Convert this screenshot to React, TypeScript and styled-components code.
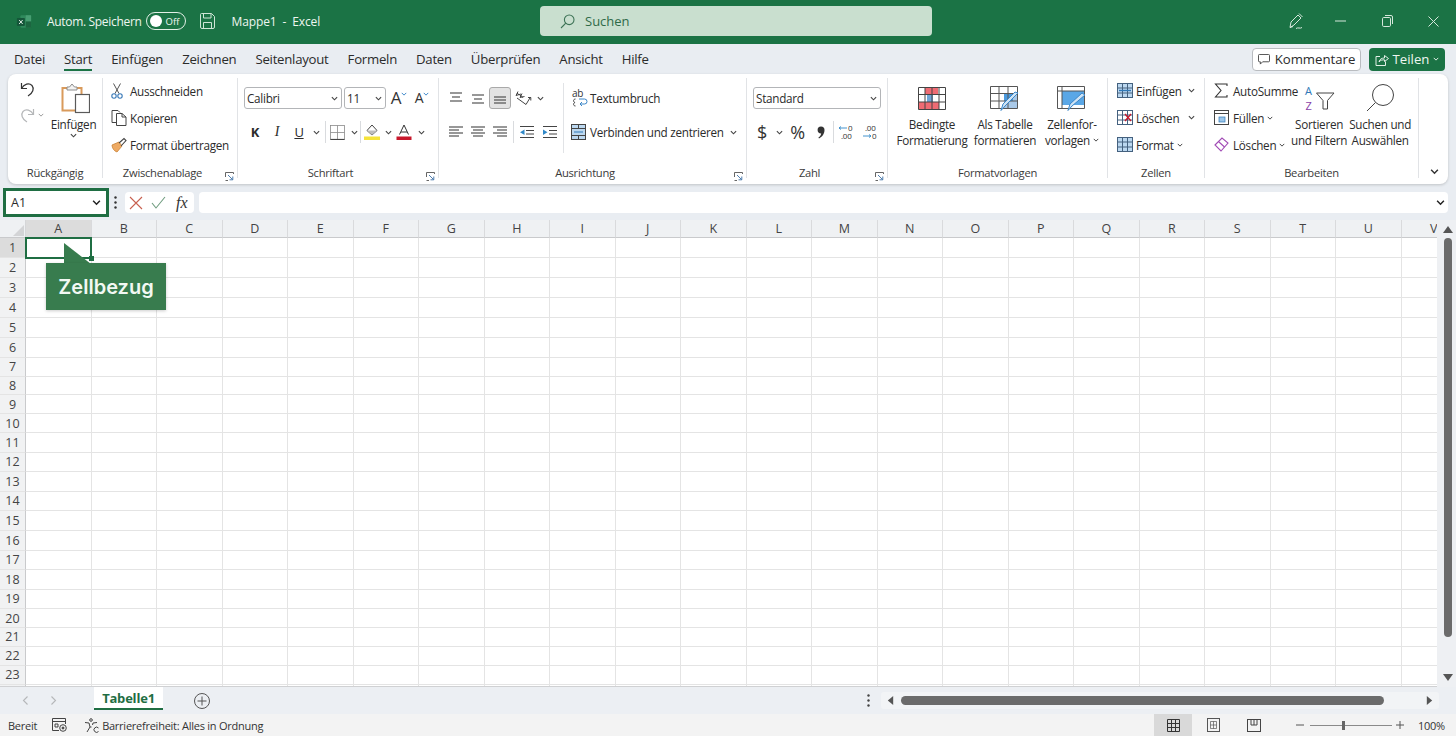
import React from 'react'
import styled, { createGlobalStyle } from 'styled-components'

const GlobalStyle = createGlobalStyle`
    html, body, #root {
        margin: 0;
        padding: 0;
        height: 100%;
        overflow: hidden;
    }
    body {
        font-family: "Open Sans", "Noto Sans", "Liberation Sans", sans-serif;
        color: #2b2b2b;
        background: #e9edf2;
    }
    * { box-sizing: border-box; }
    svg { display: block; flex-shrink: 0; }
`

const Page = styled.div`
    width: 1456px;
    height: 736px;
    display: flex;
    flex-direction: column;
    overflow: hidden;
`

// Title bar
const TitleBar = styled.header`
    height: 44px;
    flex: none;
    display: grid;
    grid-template-columns: 540px 392px 1fr;
    align-items: center;
    padding-bottom: 2px;
    background: #1b7345;
    color: #eef6f0;
    font-size: 12px;
`
const TitleLeft = styled.div`
    display: flex;
    align-items: center;
    padding-left: 16px;
`
const AutoSave = styled.span`
    margin-left: 15px;
    letter-spacing: -0.32px;
`
const Toggle = styled.span`
    width: 40px;
    height: 18px;
    margin-left: 4px;
    border: 1px solid #e3f0e7;
    border-radius: 9px;
    display: flex;
    align-items: center;
    padding-left: 3px;
    gap: 4px;
    font-size: 9.5px;
`
const ToggleKnob = styled.span`
    width: 12px;
    height: 12px;
    border-radius: 50%;
    background: #fff;
`
const DocTitle = styled.span`
    margin-left: 17px;
    white-space: pre;
    letter-spacing: -0.12px;
`
const SearchBox = styled.div`
    height: 30px;
    border-radius: 4px;
    background: #c9dfcf;
    color: #2f6a48;
    display: flex;
    align-items: center;
    padding-left: 20px;
    gap: 10px;
    font-size: 13px;
`
const WindowControls = styled.div`
    display: flex;
    align-items: center;
    padding-left: 354px;
`
const WindowSlot = styled.span<{ $w: number }>`
    width: ${(p) => p.$w}px;
    display: flex;
    justify-content: center;
`

// Tab row
const TabRow = styled.nav`
    height: 30px;
    flex: none;
    display: flex;
    align-items: center;
    padding: 0 11px 0 14px;
    gap: 19px;
    font-size: 13.2px;
    letter-spacing: -0.25px;
`
const Tab = styled.span<{ $active?: boolean }>`
    position: relative;
    line-height: 30px;
    white-space: nowrap;
    ${(p) =>
        p.$active &&
        `
        &::after {
            content: '';
            position: absolute;
            left: 0;
            right: 0;
            bottom: 3px;
            height: 2px;
            background: #1b7345;
        }
    `}
`
const TabSpacer = styled.span`
    flex: 1;
`
const CommentButton = styled.button`
    width: 109px;
    height: 23px;
    margin-right: -11px;
    border: 1px solid #b9bcc0;
    border-radius: 4px;
    background: #fff;
    display: flex;
    align-items: center;
    justify-content: center;
    gap: 5px;
    font: inherit;
    color: inherit;
    padding: 0;
`
const ShareButton = styled.button`
    width: 76px;
    height: 23px;
    border: none;
    border-radius: 4px;
    background: #1b7345;
    color: #eef6f0;
    display: flex;
    align-items: center;
    justify-content: center;
    gap: 4px;
    font: inherit;
    padding: 0;
`

// Ribbon
const Ribbon = styled.section`
    height: 110px;
    flex: none;
    margin: 0 8px;
    background: #fff;
    border-radius: 8px;
    box-shadow: 0 1px 3px rgba(0, 0, 0, 0.18);
    display: flex;
    font-size: 11.7px;
    letter-spacing: -0.27px;
`
const Group = styled.div<{ $w: number; $last?: boolean }>`
    width: ${(p) => p.$w}px;
    flex: none;
    margin: 4px 0 6px;
    display: flex;
    flex-direction: column;
    position: relative;
    border-right: ${(p) => (p.$last ? 'none' : '1px solid #e1e3e6')};
`
const GroupBody = styled.div`
    flex: 1;
    display: flex;
    min-height: 0;
`
const GroupLabel = styled.div<{ $launcher?: boolean }>`
    height: 20px;
    margin-bottom: -5px;
    flex: none;
    line-height: 20px;
    font-size: 11.2px;
    text-align: center;
    color: #3a3a3a;
    padding-right: ${(p) => (p.$launcher ? 15 : 0)}px;
`
const Launcher = styled.span`
    position: absolute;
    right: 3px;
    bottom: -3px;
`
const CommandStack = styled.div<{ $left: number }>`
    margin-top: -1px;
    padding-left: ${(p) => p.$left}px;
    display: flex;
    flex-direction: column;
`
const Command = styled.div`
    height: 27px;
    display: flex;
    align-items: center;
    white-space: nowrap;
`
const CommandIcon = styled.span`
    width: 19px;
    display: flex;
    justify-content: flex-start;
`
const Caret = styled.span<{ $left: number }>`
    margin-left: ${(p) => p.$left}px;
`
const UndoColumn = styled.div`
    width: 42px;
    padding: 3px 0 0 12px;
    display: flex;
    flex-direction: column;
    gap: 10px;
`
const UndoRow = styled.div`
    display: flex;
    align-items: center;
    gap: 3px;
`
const BigButton = styled.div<{ $w: number; $left?: number }>`
    width: ${(p) => p.$w}px;
    margin-left: ${(p) => p.$left ?? 0}px;
    flex: none;
    padding-top: 3px;
    display: flex;
    flex-direction: column;
    align-items: center;
    line-height: 16px;
    text-align: center;
    white-space: nowrap;
`
const BigIcon = styled.div`
    height: 34px;
    display: flex;
    align-items: center;
    justify-content: center;
`
const BigLabel = styled.div`
    margin-top: 1px;
    display: flex;
    flex-direction: column;
    align-items: center;
`
const LabelLine = styled.span`
    display: flex;
    align-items: center;
    gap: 3px;
`
const ToolRows = styled.div`
    display: flex;
    flex-direction: column;
    padding-top: 9px;
    gap: 12px;
`
const ToolRow = styled.div<{ $left?: number }>`
    height: 22px;
    display: flex;
    align-items: center;
    white-space: nowrap;
    padding-left: ${(p) => p.$left ?? 0}px;
`
const Slot = styled.span<{ $w: number; $active?: boolean }>`
    width: ${(p) => p.$w}px;
    height: 22px;
    flex: none;
    display: flex;
    align-items: center;
    justify-content: center;
    border-radius: 3px;
    ${(p) => p.$active && 'background: #e3e3e3; border: 1px solid #a9a9a9;'}
`
const Select = styled.div<{ $w: number }>`
    width: ${(p) => p.$w}px;
    height: 22px;
    flex: none;
    border: 1px solid #b3b5b8;
    border-radius: 3px;
    display: flex;
    align-items: center;
    justify-content: space-between;
    padding: 0 3px 0 2px;
`
const Divider = styled.span`
    width: 1px;
    height: 22px;
    flex: none;
    background: #d9dbde;
`
const FontLetter = styled.span<{ $style: 'bold' | 'italic' | 'under' }>`
    font-family: 'Liberation Serif', serif;
    font-size: 14px;
    ${(p) => p.$style === 'bold' && "font-weight: 700; font-family: 'Open Sans', sans-serif; font-size: 13px;"}
    ${(p) => p.$style === 'italic' && 'font-style: italic;'}
    ${(p) => p.$style === 'under' && "text-decoration: underline; font-family: 'Open Sans', sans-serif; font-size: 13px;"}
`
const GrowFont = styled.span`
    font-size: 17px;
    line-height: 22px;
    display: flex;
    align-items: flex-start;
    color: #333;
`
const ShrinkFont = styled(GrowFont)`
    font-size: 14px;
`
const BlueTick = styled.span`
    margin-top: 4px;
`
const NumberGlyph = styled.span`
    font-size: 18px;
    color: #333;
`
const CollapseSlot = styled.div`
    flex: 1;
    display: flex;
    justify-content: flex-end;
    align-items: flex-end;
    padding: 0 9px 8px 0;
`
const AlignRows = styled(ToolRows)`
    position: relative;
`
const AlignDivider = styled.span`
    position: absolute;
    left: 124px;
    top: 5px;
    width: 1px;
    height: 70px;
    background: #e1e3e6;
`

// Formula bar
const FormulaBar = styled.div`
    height: 36px;
    flex: none;
    display: flex;
    align-items: center;
    padding: 1px 8px 0 3px;
`
const NameBox = styled.div`
    width: 106px;
    height: 29px;
    border: 3px solid #1f6e43;
    background: #fff;
    display: flex;
    align-items: center;
    justify-content: space-between;
    padding: 0 5px 0 5px;
    font-size: 12.5px;
`
const GripSlot = styled.span`
    width: 12px;
    margin: 0 4px 0 0;
    display: flex;
    justify-content: center;
`
const FormulaButtons = styled.div`
    width: 69px;
    height: 21px;
    border-radius: 4px;
    background: #fff;
    display: flex;
    align-items: center;
    gap: 8px;
    padding-left: 4px;
`
const FxLabel = styled.span`
    margin-left: 2px;
    font-family: 'Liberation Serif', serif;
    font-style: italic;
    font-size: 16px;
    color: #333;
`
const FormulaInput = styled.div`
    flex: 1;
    height: 21px;
    margin-left: 5px;
    border-radius: 4px;
    background: #fff;
    display: flex;
    align-items: center;
    justify-content: flex-end;
    padding-right: 3px;
`

// Sheet
const SheetArea = styled.div`
    height: 467px;
    flex: none;
    display: flex;
    position: relative;
`
const SheetGrid = styled.div<{ $rows: string }>`
    width: 1437px;
    flex: none;
    display: grid;
    grid-template-columns: 26px repeat(22, 65.5px);
    grid-template-rows: ${(p) => p.$rows};
    overflow: hidden;
    background: #fff;
    border-bottom: 1px solid #d0d1d3;
`
const Corner = styled.div`
    background: #eff1f3;
    border-right: 1px solid #d5d6d8;
    border-bottom: 1px solid #c9cacc;
    display: flex;
    align-items: flex-end;
    justify-content: flex-end;
    padding: 0 1px 1px 0;
`
const ColHeader = styled.div<{ $active?: boolean }>`
    background: ${(p) => (p.$active ? '#dcdcdc' : '#eff1f3')};
    border-right: 1px solid #d9dadc;
    border-bottom: 1px solid #c9cacc;
    font-size: 12.5px;
    color: #444;
    display: flex;
    align-items: center;
    justify-content: center;
`
const RowHeader = styled.div<{ $active?: boolean }>`
    background: ${(p) => (p.$active ? '#dcdcdc' : '#f1f2f3')};
    border-right: 1px solid #c9cacc;
    border-bottom: 1px solid #e4e4e4;
    font-size: 12.5px;
    color: #444;
    display: flex;
    align-items: center;
    justify-content: center;
`
const Cell = styled.div`
    border-right: 1px solid #e4e4e4;
    border-bottom: 1px solid #e4e4e4;
`
const Selection = styled.div`
    position: absolute;
    left: 25px;
    top: 17px;
    width: 67px;
    height: 22px;
    border: 2px solid #1f6e43;
    &::after {
        content: '';
        position: absolute;
        right: -4px;
        bottom: -4px;
        width: 5px;
        height: 5px;
        background: #1f6e43;
    }
`
const CalloutArrow = styled.svg`
    position: absolute;
    left: 63px;
    top: 23px;
`
const Callout = styled.div`
    position: absolute;
    left: 46px;
    top: 43px;
    width: 120px;
    height: 47px;
    background: #387c4e;
    color: #f2f8f3;
    font-family: Inter, 'Open Sans', sans-serif;
    font-weight: 600;
    font-size: 20px;
    display: flex;
    align-items: center;
    justify-content: center;
    box-shadow: 0 1px 3px rgba(0, 0, 0, 0.2);
`
const VScroll = styled.div`
    flex: 1;
    background: #eef0f3;
    display: flex;
    flex-direction: column;
    align-items: center;
    padding: 5px 0 5px 2px;
`
const VThumb = styled.div`
    width: 8px;
    height: 399px;
    margin-top: 3px;
    border-radius: 4px;
    background: #6b6b6b;
`
const VFill = styled.div`
    flex: 1;
`

// Sheet tabs bar
const SheetBar = styled.div`
    height: 27px;
    flex: none;
    display: flex;
    align-items: center;
    background: #eceff3;
`
const SheetNav = styled.div`
    width: 94px;
    padding-left: 22px;
    display: flex;
    gap: 21px;
`
const SheetTab = styled.div`
    width: 69px;
    height: 23px;
    margin-top: -5px;
    padding-top: 2px;
    background: #fff;
    border-bottom: 2px solid #1f6e43;
    color: #1f6e43;
    font-weight: 700;
    font-size: 13px;
    letter-spacing: -0.2px;
    display: flex;
    align-items: center;
    justify-content: center;
`
const AddSheet = styled.span`
    margin-left: 31px;
    width: 16px;
`
const SheetDots = styled.span`
    margin-left: 652px;
    width: 12px;
    display: flex;
    justify-content: center;
`
const HScroll = styled.div`
    width: 558px;
    height: 17px;
    margin-left: 7px;
    border-radius: 3px;
    background: #f2f4f6;
    display: flex;
    align-items: center;
    padding: 0 5px 0 5px;
`
const HThumb = styled.div`
    width: 483px;
    height: 9px;
    margin-left: 6px;
    border-radius: 5px;
    background: #6b6b6b;
`
const HScrollEnd = styled.span`
    margin-left: auto;
`

// Status bar
const StatusBar = styled.footer`
    height: 22px;
    flex: none;
    display: flex;
    align-items: center;
    background: #f3f3f3;
    font-size: 11px;
    letter-spacing: -0.25px;
    color: #333;
    padding: 0 11px 0 8px;
    white-space: nowrap;
`
const StatusIcon = styled.span<{ $left: number }>`
    margin-left: ${(p) => p.$left}px;
`
const StatusText = styled.span`
    margin-left: 3px;
`
const StatusSpacer = styled.span`
    flex: 1;
`
const ViewButton = styled.span<{ $active?: boolean; $left?: number }>`
    width: 38px;
    height: 22px;
    margin-left: ${(p) => p.$left ?? 0}px;
    display: flex;
    align-items: center;
    justify-content: center;
    background: ${(p) => (p.$active ? '#d9d9d9' : 'transparent')};
`
const ZoomSlider = styled.div`
    width: 82px;
    height: 1px;
    margin: 0 4px 0 6px;
    background: #8a8a8a;
    position: relative;
`
const ZoomThumb = styled.span`
    position: absolute;
    left: 32px;
    top: -4px;
    width: 3px;
    height: 9px;
    background: #666;
`
const ZoomPercent = styled.span`
    width: 27px;
    margin-left: 14px;
`

// Icons, drawn by hand so that they look like the Office ones
const Chevron = ({ size = 7, color = '#444' }: { size?: number; color?: string }) => (
    <svg width={size} height={size} viewBox="0 0 8 8" fill="none" stroke={color} strokeWidth="1.3">
        <path d="M1 2.5 4 5.5 7 2.5" />
    </svg>
)

const LauncherIcon = () => (
    <svg width="9" height="9" viewBox="0 0 9 9" fill="none" stroke="#555" strokeWidth="0.9">
        <path d="M.5 5V.5H8.5V2M.5 8.5H3" />
        <path d="M3 3 7.5 7.5M7.8 4.5V7.8H4.5" stroke="#3a6ea5" />
    </svg>
)

const Lines = ({ rows, w = 16, color = '#444' }: { rows: number[][]; w?: number; color?: string }) => (
    <svg width={w} height="14" viewBox="0 0 16 14" fill="none" stroke={color} strokeWidth="1.1">
        {rows.map((r, i) => (
            <path key={i} d={`M${r[0]} ${r[2]}H${r[1]}`} />
        ))}
    </svg>
)

const ExcelLogo = () => (
    <svg width="16" height="15" viewBox="0 0 18 16">
        <rect x="5" y="1" width="12" height="14" rx="1" fill="#2f8a5c" />
        <rect x="11" y="1" width="6" height="7" fill="#479e72" />
        <rect x="11" y="8" width="6" height="7" fill="#1c6640" />
        <rect x="1" y="4" width="9" height="9" rx="1" fill="#15573a" />
        <path d="M3.5 6.3 7.5 10.8M7.5 6.3 3.5 10.8" stroke="#e8f3ec" strokeWidth="1.1" />
    </svg>
)

const SaveIcon = () => (
    <svg width="15" height="16" viewBox="0 0 15 16" fill="none" stroke="#cfe5d6" strokeWidth="1">
        <path d="M1.5.5H11.5L14.5 3.5V14A1.5 1.5 0 0 1 13 15.5H2A1.5 1.5 0 0 1 .5 14V1.5A1 1 0 0 1 1.5.5Z" />
        <path d="M3.5 .5V5H11V.5M3.5 15.5V9.5H11.5V15.5" />
    </svg>
)

const PenIcon = () => (
    <svg width="16" height="18" viewBox="0 0 16 18" fill="none" stroke="#d6e8dc" strokeWidth="1">
        <path d="M2 15.5 3 10 10 3 13 6 6 13ZM2 15.5 5 14.5M11 1.5 14.5 5" />
        <path d="M8 16.5C10 15 12 17 14 15.5" />
    </svg>
)

const SearchIcon = () => (
    <svg width="15" height="15" viewBox="0 0 15 15" fill="none" stroke="#3d7356" strokeWidth="1.1">
        <circle cx="9.2" cy="5.8" r="4.8" />
        <path d="M5.8 9.2 1 14" />
    </svg>
)

const MinIcon = () => (
    <svg width="11" height="2" viewBox="0 0 11 2" stroke="#d6e8dc">
        <path d="M0 1H11" />
    </svg>
)
const RestoreIcon = () => (
    <svg width="11" height="12" viewBox="0 0 11 12" fill="none" stroke="#d6e8dc">
        <rect x=".5" y="2.5" width="8" height="9" rx="1.2" />
        <path d="M3 .5H9A1.5 1.5 0 0 1 10.5 2V9" />
    </svg>
)
const CloseIcon = () => (
    <svg width="11" height="11" viewBox="0 0 11 11" stroke="#d6e8dc">
        <path d="M.5.5 10.5 10.5M10.5.5.5 10.5" />
    </svg>
)
const CommentIcon = () => (
    <svg width="12" height="11" viewBox="0 0 13 12" fill="none" stroke="#444">
        <path d="M1.5.5H11.5A1 1 0 0 1 12.5 1.5V7.5A1 1 0 0 1 11.5 8.5H5L2.5 11V8.5H1.5A1 1 0 0 1 .5 7.5V1.5A1 1 0 0 1 1.5.5Z" />
    </svg>
)
const ShareIcon = () => (
    <svg width="14" height="13" viewBox="0 0 14 13" fill="none" stroke="#e3f0e7">
        <path d="M5 3.5H1V12.5H10.5V8.5" />
        <path d="M4 9C4.5 6 7 5 9.5 5V2.5L13.5 5.5 9.5 8.5V6.8C7.5 6.8 5.5 7 4 9Z" />
    </svg>
)

const UndoIcon = () => (
    <svg width="15" height="16" viewBox="0 0 15 16" fill="none" stroke="#333" strokeWidth="1.2">
        <path d="M1.5 2V7.5H7" />
        <path d="M1.5 7.5C4 3 9 1.5 12 4.5C14.5 7.5 13 12 8 15" />
    </svg>
)
const RedoIcon = () => (
    <svg width="15" height="16" viewBox="0 0 15 16" fill="none" stroke="#b5b7b9" strokeWidth="1.2">
        <path d="M13.5 2V7.5H8" />
        <path d="M13.5 7.5C11 3 6 1.5 3 4.5C.5 7.5 2 12 7 15" />
    </svg>
)
const PasteIcon = () => (
    <svg width="32" height="31" viewBox="-3 0 32 31" fill="none">
        <path d="M6 5H1.5V27.5H14" stroke="#d99a5b" strokeWidth="2" />
        <path d="M16 5H20.5V11" stroke="#d99a5b" strokeWidth="2" />
        <path d="M6 7V4H8.5L11 1 13.5 4H16V7Z" stroke="#8d8d8d" fill="#f3f3f3" />
        <rect x="14.5" y="11.5" width="14" height="18" fill="#fff" stroke="#5a5a5a" strokeWidth="1.2" />
    </svg>
)
const CutIcon = () => (
    <svg width="12" height="16" viewBox="0 0 12 16" fill="none">
        <path d="M2.5 .5 8 10.5M9.5 .5 4 10.5" stroke="#555" />
        <circle cx="3" cy="13" r="2.2" stroke="#3a7ab8" strokeWidth="1.1" />
        <circle cx="9" cy="13" r="2.2" stroke="#3a7ab8" strokeWidth="1.1" />
    </svg>
)
const CopyIcon = () => (
    <svg width="16" height="16" viewBox="0 0 16 16" fill="none" stroke="#444">
        <path d="M5 12.5H1V.5H7L9 2.5" />
        <path d="M5.5 3.5H11L15 7V15.5H5.5Z" />
        <path d="M11 3.5V7H15" />
    </svg>
)
const PainterIcon = () => (
    <svg width="16" height="16" viewBox="0 0 16 16" fill="none">
        <path d="M1 8 8 5 11 9 6 15C3 14 1 11 1 8Z" fill="#eeaa63" stroke="#c98136" strokeWidth=".8" />
        <path d="M8 6 13 1.5 15 3.5 10 9" stroke="#444" strokeWidth="1.1" />
    </svg>
)
const BordersIcon = () => (
    <svg width="15" height="15" viewBox="0 0 15 15" fill="none" stroke="#8a8a8a" strokeWidth=".8">
        <rect x=".5" y=".5" width="14" height="14" />
        <path d="M7.5 .5V14.5M.5 7.5H14.5" />
        <path d="M.5 14.5H14.5" stroke="#444" strokeWidth="1.2" />
    </svg>
)
const FillIcon = () => (
    <svg width="16" height="16" viewBox="0 0 16 16" fill="none">
        <path d="M8 1 13 6.5 8 11 3 6.5Z" stroke="#444" strokeWidth="1" />
        <path d="M3 6.5H13L8 11Z" fill="#bdbdbd" />
        <rect x="0" y="12.5" width="16" height="3.5" fill="#f5e33a" />
    </svg>
)
const FontColorIcon = () => (
    <svg width="16" height="16" viewBox="0 0 16 16" fill="none">
        <path d="M3.5 10.5 8 1 12.5 10.5M5 8H11" stroke="#333" strokeWidth="1" />
        <rect x="0.5" y="12.5" width="15" height="3.5" fill="#c8182c" />
    </svg>
)
const OrientIcon = () => (
    <svg width="18" height="16" viewBox="0 0 18 16" fill="none">
        <path d="M4 1.5 2 5.5 7 4M3 3.2 5.5 5M8 3.5 6 7.5 10.5 6.5M6 5 9 7.5" stroke="#333" strokeWidth=".9" />
        <path d="M3 8 12 14.5 16.5 7M14 7.5H16.8V10.5" stroke="#444" strokeWidth="1" />
    </svg>
)
const WrapIcon = () => (
    <svg width="15" height="18" viewBox="0 0 15 18" fill="none" overflow="visible">
        <text x="0" y="8" fontSize="10" fill="#333" fontFamily="Open Sans">ab</text>
        <path d="M3.5 10C1 10 1 13 3 13.5C1 14 1 17 3.5 17" stroke="#333" strokeWidth=".9" />
        <path d="M7 10H12.5A2 2 0 0 1 12.5 15H8M10 13 8 15 10 17" stroke="#3a86c8" strokeWidth="1" />
    </svg>
)
const MergeIcon = () => (
    <svg width="15" height="16" viewBox="0 0 15 16" fill="none">
        <rect x=".5" y=".5" width="14" height="15" fill="#bcd8f0" stroke="#444" />
        <path d="M.5 4.5H14.5M.5 11.5H14.5M7.5 .5V4.5M7.5 11.5V15.5" stroke="#444" />
        <path d="M3 8H12" stroke="#2f78b7" />
    </svg>
)
const IndentIcon = ({ flip }: { flip?: boolean }) => (
    <svg width="16" height="14" viewBox="0 0 16 14" fill="none">
        <path d="M1 1.5H15M7 5.5H15M7 9H15M1 12.5H15" stroke="#444" strokeWidth="1.1" />
        <path d={flip ? 'M1 7.2 5.5 4.5V10Z' : 'M5.5 7.2 1 4.5V10Z'} fill="#2f88c8" />
    </svg>
)
const CommaIcon = () => (
    <svg width="8" height="13" viewBox="0 0 8 13">
        <path d="M4 .5A3.5 3.5 0 0 1 7.5 4C7.5 8 5 11 2 12.5L1.4 11.6C3 10.4 4 9 4.2 7.5A3.5 3.5 0 0 1 4 .5Z" fill="#333" />
    </svg>
)
const DecimalIcon = ({ more }: { more?: boolean }) => (
    <svg width="19" height="16" viewBox="0 0 19 16" fill="none" overflow="visible">
        <text x={more ? 10 : 4} y="6.5" fontSize="8" fill="#333" fontFamily="Open Sans">{more ? '0' : '.00'}</text>
        <text x={more ? 3 : 11} y="15" fontSize="8" fill="#333" fontFamily="Open Sans">{more ? '.00' : '0'}</text>
        {more ? (
            <path d="M1 4H9M1 4 3 2.5M1 4 3 5.5" stroke="#2f88c8" strokeWidth=".9" />
        ) : (
            <path d="M2 12H10M10 12 8 10.5M10 12 8 13.5" stroke="#2f88c8" strokeWidth=".9" />
        )}
    </svg>
)
const ConditionalIcon = () => (
    <svg width="28" height="23" viewBox="0 0 28 23" fill="none">
        <rect x="7" y=".5" width="13" height="7" fill="#ef6b73" />
        <rect x="1" y="15" width="20" height="7" fill="#ef6b73" />
        <rect x="9" y="8" width="6" height="7" fill="#6fa6d8" />
        <path d="M.5.5H27.5V22.5H.5ZM.5 7.5H27.5M.5 15H27.5M7 .5V22.5M14 .5V22.5M21 .5V22.5" stroke="#444" />
    </svg>
)
const TableIcon = () => (
    <svg width="30" height="25" viewBox="0 0 30 25" fill="none">
        <rect x="14" y="8" width="14" height="14" fill="#a9c9e8" />
        <rect x="14" y="8" width="9" height="7" fill="#4b9ade" />
        <path d="M.5.5H27.5V22.5H.5ZM.5 7.5H27.5M.5 15H27.5M9 .5V22.5M18 .5V22.5" stroke="#555" />
        <path d="M28 7 15 20 11 24.5 13 18 25 6Z" fill="#cfe3f4" stroke="#3a86c8" />
    </svg>
)
const CellStyleIcon = () => (
    <svg width="30" height="25" viewBox="0 0 30 25" fill="none">
        <rect x="5" y="5" width="22" height="14" fill="#5aa7e6" />
        <path d="M.5.5H27.5V22.5H.5ZM.5 5H27.5M5 .5V22.5" stroke="#555" />
        <path d="M28 9 15 20 11 24.5 13 18 25 7Z" fill="#cfe3f4" stroke="#3a86c8" />
    </svg>
)
const CellsTable = ({ variant }: { variant: 'insert' | 'delete' | 'format' }) => (
    <svg width="16" height="15" viewBox="0 0 16 15" fill="none">
        <rect x=".5" y=".5" width="15" height="14" fill={variant === 'delete' ? '#fff' : '#bcd8f0'} stroke="#44617f" />
        <path d="M.5 5H15.5M.5 10H15.5M5.5 .5V14.5M10.5 .5V14.5" stroke="#44617f" />
        {variant === 'insert' && <path d="M2 7.5H14" stroke="#2f78b7" strokeWidth="1.4" />}
        {variant === 'delete' && <path d="M8 4 14 11M14 4 8 11" stroke="#c8182c" strokeWidth="1.3" />}
    </svg>
)
const SumIcon = () => (
    <svg width="14" height="15" viewBox="0 0 14 15" fill="none" stroke="#333" strokeWidth="1.1">
        <path d="M13 3V1H1.5L7 7.5 1.5 14H13V12" />
    </svg>
)
const FillDownIcon = () => (
    <svg width="15" height="15" viewBox="0 0 15 15" fill="none">
        <rect x=".5" y=".5" width="14" height="14" fill="#fff" stroke="#444" />
        <path d="M.5 3.5H14.5" stroke="#444" />
        <rect x="5" y="7" width="6" height="5" fill="#9cc6ea" stroke="#2f78b7" strokeWidth=".7" />
    </svg>
)
const EraserIcon = () => (
    <svg width="15" height="15" viewBox="0 0 15 15" fill="none" stroke="#a14bb5" strokeWidth="1.1">
        <path d="M1 8 8 1 14 6 7 14Z" />
        <path d="M4.5 4.5 10.5 10" />
    </svg>
)
const SortIcon = () => (
    <svg width="31" height="26" viewBox="0 0 31 26" fill="none" overflow="visible">
        <text x="1" y="10" fontSize="11" fill="#2f78b7" fontFamily="Open Sans">A</text>
        <text x="1.5" y="25" fontSize="11" fill="#8a3fa8" fontFamily="Open Sans">Z</text>
        <path d="M12.5 8H30L23.5 15.5V24H19V15.5Z" stroke="#444" />
    </svg>
)
const FindIcon = () => (
    <svg width="29" height="28" viewBox="0 0 29 28" fill="none" stroke="#444">
        <circle cx="17" cy="11" r="10.5" />
        <path d="M9.5 18.5 1 27" />
    </svg>
)
const GripDots = ({ color = '#333' }: { color?: string }) => (
    <svg width="3" height="13" viewBox="0 0 3 13" fill={color}>
        <circle cx="1.5" cy="1.5" r="1.2" />
        <circle cx="1.5" cy="6.5" r="1.2" />
        <circle cx="1.5" cy="11.5" r="1.2" />
    </svg>
)
const CancelIcon = () => (
    <svg width="14" height="14" viewBox="0 0 14 14" stroke="#c8604f" strokeWidth="1.1">
        <path d="M1 1 13 13M13 1 1 13" />
    </svg>
)
const ConfirmIcon = () => (
    <svg width="15" height="13" viewBox="0 0 15 13" fill="none" stroke="#6f9c7f" strokeWidth="1.1">
        <path d="M1 7 5 12 14 1" />
    </svg>
)
const Triangle = ({ dir, size = 9, color = '#555' }: { dir: 'up' | 'down' | 'left' | 'right'; size?: number; color?: string }) => {
    const d = { up: 'M0 8 5 1 10 8Z', down: 'M0 2 10 2 5 9Z', left: 'M8 0V10L2 5Z', right: 'M2 0V10L8 5Z' }[dir]
    return (
        <svg width={size} height={size} viewBox="0 0 10 10" fill={color}>
            <path d={d} />
        </svg>
    )
}
const CornerTriangle = () => (
    <svg width="11" height="11" viewBox="0 0 11 11" fill="#d3d4d6">
        <path d="M11 0V11H0Z" />
    </svg>
)
const NavArrow = ({ flip }: { flip?: boolean }) => (
    <svg width="7" height="9" viewBox="0 0 7 9" fill="none" stroke="#b5b7b9" strokeWidth="1.1">
        <path d={flip ? 'M1.5.5 5.5 4.5 1.5 8.5' : 'M5.5.5 1.5 4.5 5.5 8.5'} />
    </svg>
)
const AddSheetIcon = () => (
    <svg width="16" height="16" viewBox="0 0 16 16" fill="none" stroke="#555">
        <circle cx="8" cy="8" r="7.5" />
        <path d="M8 3.5V12.5M3.5 8H12.5" />
    </svg>
)
const MacroIcon = () => (
    <svg width="15" height="14" viewBox="0 0 15 14" fill="none" stroke="#444">
        <path d="M7 12.5H.5V.5H13.5V6M.5 3.5H13.5M3 6H6V9H3Z" />
        <circle cx="11" cy="10" r="3.3" />
        <circle cx="11" cy="10" r="1" fill="#444" />
    </svg>
)
const AccessIcon = () => (
    <svg width="15" height="15" viewBox="0 0 15 15" fill="none" stroke="#444">
        <circle cx="7" cy="2" r="1.3" />
        <path d="M1 4.5 5 5 6 9 3 14M13 4.5 9 5 8.5 7M6 9H7.5" />
        <path d="M14.5 10A2.6 2.6 0 1 0 14.5 13.5" />
    </svg>
)
const GridViewIcon = () => (
    <svg width="13" height="13" viewBox="0 0 13 13" fill="none" stroke="#333">
        <path d="M.5.5H12.5V12.5H.5ZM.5 4.5H12.5M.5 8.5H12.5M4.5 .5V12.5M8.5 .5V12.5" />
    </svg>
)
const PageViewIcon = () => (
    <svg width="13" height="14" viewBox="0 0 13 14" fill="none" stroke="#555">
        <rect x=".5" y=".5" width="12" height="13" />
        <path d="M3.5 3.5H9.5V10.5H3.5ZM3.5 7H9.5M6.5 3.5V10.5" strokeWidth=".7" />
    </svg>
)
const BreakViewIcon = () => (
    <svg width="14" height="13" viewBox="0 0 14 13" fill="none" stroke="#444">
        <rect x=".5" y=".5" width="13" height="12" />
        <path d="M4 .5V6H10V.5M7 .5V6" />
    </svg>
)
const ZoomMinus = () => (
    <svg width="8" height="2" viewBox="0 0 8 2" stroke="#555">
        <path d="M0 1H8" />
    </svg>
)
const ZoomPlus = () => (
    <svg width="8" height="8" viewBox="0 0 8 8" stroke="#555">
        <path d="M0 4H8M4 0V8" />
    </svg>
)

const COLUMNS = 'ABCDEFGHIJKLMNOPQRSTUV'.split('')
const ROW_HEIGHTS = [20, 20, 20, 20, 20, 19.5, 19, 18.5, 19, 19, 19.5, 19.5, 19.5, 19.5, 20, 19.5, 19.5, 19.5, 19.5, 19, 18.5, 19, 19, 4]

function Sheet(): React.JSX.Element {
    const rows = `18px ${ROW_HEIGHTS.map((h) => `${h}px`).join(' ')}`
    return (
        <SheetArea>
            <SheetGrid $rows={rows}>
                <Corner>
                    <CornerTriangle />
                </Corner>
                {COLUMNS.map((c, i) => (
                    <ColHeader key={c} $active={i === 0}>
                        {c}
                    </ColHeader>
                ))}
                {ROW_HEIGHTS.map((_, r) => (
                    <React.Fragment key={r}>
                        <RowHeader $active={r === 0}>{r < 23 ? r + 1 : ''}</RowHeader>
                        {COLUMNS.map((c) => (
                            <Cell key={c} />
                        ))}
                    </React.Fragment>
                ))}
            </SheetGrid>
            <VScroll>
                <Triangle dir="up" size={10} />
                <VThumb />
                <VFill />
                <Triangle dir="down" size={10} />
            </VScroll>
            <Selection />
            <CalloutArrow width="28" height="21" viewBox="0 0 28 21">
                <path d="M1 0V21H28Z" fill="#387c4e" />
            </CalloutArrow>
            <Callout>Zellbezug</Callout>
        </SheetArea>
    )
}

function RibbonBar(): React.JSX.Element {
    return (
        <Ribbon>
            <Group $w={95}>
                <GroupBody>
                    <UndoColumn>
                        <UndoIcon />
                        <UndoRow>
                            <RedoIcon />
                            <Chevron size={6} color="#999" />
                        </UndoRow>
                    </UndoColumn>
                    <BigButton $w={47}>
                        <BigIcon><PasteIcon /></BigIcon>
                        <BigLabel>
                            <span>Einfügen</span>
                            <Chevron />
                        </BigLabel>
                    </BigButton>
                </GroupBody>
                <GroupLabel>Rückgängig</GroupLabel>
            </Group>

            <Group $w={135}>
                <GroupBody>
                    <CommandStack $left={8}>
                        <Command>
                            <CommandIcon><CutIcon /></CommandIcon>Ausschneiden
                        </Command>
                        <Command>
                            <CommandIcon><CopyIcon /></CommandIcon>Kopieren
                        </Command>
                        <Command>
                            <CommandIcon><PainterIcon /></CommandIcon>Format übertragen
                        </Command>
                    </CommandStack>
                </GroupBody>
                <GroupLabel $launcher>Zwischenablage</GroupLabel>
                <Launcher><LauncherIcon /></Launcher>
            </Group>

            <Group $w={201}>
                <GroupBody>
                    <ToolRows>
                        <ToolRow $left={6}>
                            <Select $w={98}>Calibri<Chevron /></Select>
                            <Slot $w={2} />
                            <Select $w={42}>11<Chevron /></Select>
                            <Slot $w={26}>
                                <GrowFont>A<BlueTick><Chevron size={6} color="#3a86c8" /></BlueTick></GrowFont>
                            </Slot>
                            <Slot $w={20}>
                                <ShrinkFont>A<BlueTick><Chevron size={6} color="#3a86c8" /></BlueTick></ShrinkFont>
                            </Slot>
                        </ToolRow>
                        <ToolRow $left={6}>
                            <Slot $w={22}><FontLetter $style="bold">K</FontLetter></Slot>
                            <Slot $w={22}><FontLetter $style="italic">I</FontLetter></Slot>
                            <Slot $w={22}><FontLetter $style="under">U</FontLetter></Slot>
                            <Slot $w={12}><Chevron /></Slot>
                            <Slot $w={3} />
                            <Divider />
                            <Slot $w={22}><BordersIcon /></Slot>
                            <Slot $w={12}><Chevron /></Slot>
                            <Divider />
                            <Slot $w={22}><FillIcon /></Slot>
                            <Slot $w={10}><Chevron /></Slot>
                            <Slot $w={22}><FontColorIcon /></Slot>
                            <Slot $w={12}><Chevron /></Slot>
                        </ToolRow>
                    </ToolRows>
                </GroupBody>
                <GroupLabel $launcher>Schriftart</GroupLabel>
                <Launcher><LauncherIcon /></Launcher>
            </Group>

            <Group $w={308}>
                <GroupBody>
                    <AlignRows>
                        <AlignDivider />
                        <ToolRow $left={5}>
                            <Slot $w={23}><Lines rows={[[2, 14, 2], [4, 12, 6], [2, 14, 10]]} /></Slot>
                            <Slot $w={22}><Lines rows={[[2, 14, 4], [4, 12, 8], [2, 14, 12]]} /></Slot>
                            <Slot $w={22} $active><Lines rows={[[2, 14, 6], [2, 14, 9], [2, 14, 12]]} /></Slot>
                            <Slot $w={24}><OrientIcon /></Slot>
                            <Slot $w={10}><Chevron /></Slot>
                            <Slot $w={27} />
                            <WrapIcon />
                            <Caret $left={3}>Textumbruch</Caret>
                        </ToolRow>
                        <ToolRow $left={5}>
                            <Slot $w={23}><Lines rows={[[1, 15, 2], [1, 11, 5], [1, 15, 8], [1, 11, 11]]} /></Slot>
                            <Slot $w={22}><Lines rows={[[1, 15, 2], [3, 13, 5], [1, 15, 8], [3, 13, 11]]} /></Slot>
                            <Slot $w={22}><Lines rows={[[1, 15, 2], [5, 15, 5], [1, 15, 8], [5, 15, 11]]} /></Slot>
                            <Slot $w={2} />
                            <Divider />
                            <Slot $w={26}><IndentIcon flip /></Slot>
                            <Slot $w={20}><IndentIcon /></Slot>
                            <Slot $w={11} />
                            <MergeIcon />
                            <Caret $left={4}>Verbinden und zentrieren</Caret>
                            <Caret $left={6}><Chevron /></Caret>
                        </ToolRow>
                    </AlignRows>
                </GroupBody>
                <GroupLabel $launcher>Ausrichtung</GroupLabel>
                <Launcher><LauncherIcon /></Launcher>
            </Group>

            <Group $w={141}>
                <GroupBody>
                    <ToolRows>
                        <ToolRow $left={6}>
                            <Select $w={128}>Standard<Chevron /></Select>
                        </ToolRow>
                        <ToolRow $left={4}>
                            <Slot $w={22}><NumberGlyph>$</NumberGlyph></Slot>
                            <Slot $w={12}><Chevron /></Slot>
                            <Slot $w={25}><NumberGlyph>%</NumberGlyph></Slot>
                            <Slot $w={21}><CommaIcon /></Slot>
                            <Slot $w={2} />
                            <Divider />
                            <Slot $w={26}><DecimalIcon more /></Slot>
                            <Slot $w={20}><DecimalIcon /></Slot>
                        </ToolRow>
                    </ToolRows>
                </GroupBody>
                <GroupLabel $launcher>Zahl</GroupLabel>
                <Launcher><LauncherIcon /></Launcher>
            </Group>

            <Group $w={220}>
                <GroupBody>
                    <BigButton $w={78} $left={5}>
                        <BigIcon><ConditionalIcon /></BigIcon>
                        <BigLabel>
                            <span>Bedingte</span>
                            <span>Formatierung</span>
                        </BigLabel>
                    </BigButton>
                    <BigButton $w={68}>
                        <BigIcon><TableIcon /></BigIcon>
                        <BigLabel>
                            <span>Als Tabelle</span>
                            <span>formatieren</span>
                        </BigLabel>
                    </BigButton>
                    <BigButton $w={66}>
                        <BigIcon><CellStyleIcon /></BigIcon>
                        <BigLabel>
                            <span>Zellenfor-</span>
                            <LabelLine>vorlagen <Chevron size={6} /></LabelLine>
                        </BigLabel>
                    </BigButton>
                </GroupBody>
                <GroupLabel>Formatvorlagen</GroupLabel>
            </Group>

            <Group $w={97}>
                <GroupBody>
                    <CommandStack $left={9}>
                        <Command>
                            <CommandIcon><CellsTable variant="insert" /></CommandIcon>Einfügen<Caret $left={6}><Chevron /></Caret>
                        </Command>
                        <Command>
                            <CommandIcon><CellsTable variant="delete" /></CommandIcon>Löschen<Caret $left={9}><Chevron /></Caret>
                        </Command>
                        <Command>
                            <CommandIcon><CellsTable variant="format" /></CommandIcon>Format<Caret $left={3}><Chevron size={6} /></Caret>
                        </Command>
                    </CommandStack>
                </GroupBody>
                <GroupLabel>Zellen</GroupLabel>
            </Group>

            <Group $w={214}>
                <GroupBody>
                    <CommandStack $left={9}>
                        <Command>
                            <CommandIcon><SumIcon /></CommandIcon>AutoSumme
                        </Command>
                        <Command>
                            <CommandIcon><FillDownIcon /></CommandIcon>Füllen<Caret $left={3}><Chevron size={6} /></Caret>
                        </Command>
                        <Command>
                            <CommandIcon><EraserIcon /></CommandIcon>Löschen<Caret $left={3}><Chevron size={6} /></Caret>
                        </Command>
                    </CommandStack>
                    <BigButton $w={62} $left={-10}>
                        <BigIcon><SortIcon /></BigIcon>
                        <BigLabel>
                            <span>Sortieren</span>
                            <span>und Filtern</span>
                        </BigLabel>
                    </BigButton>
                    <BigButton $w={62} $left={-1}>
                        <BigIcon><FindIcon /></BigIcon>
                        <BigLabel>
                            <span>Suchen und</span>
                            <span>Auswählen</span>
                        </BigLabel>
                    </BigButton>
                </GroupBody>
                <GroupLabel>Bearbeiten</GroupLabel>
            </Group>

            <CollapseSlot>
                <Chevron size={9} color="#333" />
            </CollapseSlot>
        </Ribbon>
    )
}

export default function App(): React.JSX.Element {
    return (
        <Page>
            <GlobalStyle />
            <TitleBar>
                <TitleLeft>
                    <ExcelLogo />
                    <AutoSave>Autom. Speichern</AutoSave>
                    <Toggle>
                        <ToggleKnob />
                        Off
                    </Toggle>
                    <Caret $left={14}><SaveIcon /></Caret>
                    <DocTitle>Mappe1  -  Excel</DocTitle>
                </TitleLeft>
                <SearchBox>
                    <SearchIcon />
                    Suchen
                </SearchBox>
                <WindowControls>
                    <WindowSlot $w={20}><PenIcon /></WindowSlot>
                    <WindowSlot $w={68}><MinIcon /></WindowSlot>
                    <WindowSlot $w={26}><RestoreIcon /></WindowSlot>
                    <WindowSlot $w={66}><CloseIcon /></WindowSlot>
                </WindowControls>
            </TitleBar>

            <TabRow>
                <Tab>Datei</Tab>
                <Tab $active>Start</Tab>
                <Tab>Einfügen</Tab>
                <Tab>Zeichnen</Tab>
                <Tab>Seitenlayout</Tab>
                <Tab>Formeln</Tab>
                <Tab>Daten</Tab>
                <Tab>Überprüfen</Tab>
                <Tab>Ansicht</Tab>
                <Tab>Hilfe</Tab>
                <TabSpacer />
                <CommentButton><CommentIcon />Kommentare</CommentButton>
                <ShareButton><ShareIcon />Teilen<Chevron size={6} color="#e3f0e7" /></ShareButton>
            </TabRow>

            <RibbonBar />

            <FormulaBar>
                <NameBox>A1<Chevron size={9} color="#222" /></NameBox>
                <GripSlot><GripDots /></GripSlot>
                <FormulaButtons>
                    <CancelIcon />
                    <ConfirmIcon />
                    <FxLabel>fx</FxLabel>
                </FormulaButtons>
                <FormulaInput><Chevron size={9} color="#222" /></FormulaInput>
            </FormulaBar>

            <Sheet />

            <SheetBar>
                <SheetNav>
                    <NavArrow />
                    <NavArrow flip />
                </SheetNav>
                <SheetTab>Tabelle1</SheetTab>
                <AddSheet><AddSheetIcon /></AddSheet>
                <SheetDots><GripDots color="#444" /></SheetDots>
                <HScroll>
                    <Triangle dir="left" />
                    <HThumb />
                    <HScrollEnd><Triangle dir="right" /></HScrollEnd>
                </HScroll>
            </SheetBar>

            <StatusBar>
                Bereit
                <StatusIcon $left={15}><MacroIcon /></StatusIcon>
                <StatusIcon $left={17}><AccessIcon /></StatusIcon>
                <StatusText>Barrierefreiheit: Alles in Ordnung</StatusText>
                <StatusSpacer />
                <ViewButton $active><GridViewIcon /></ViewButton>
                <ViewButton $left={2}><PageViewIcon /></ViewButton>
                <ViewButton $left={3}><BreakViewIcon /></ViewButton>
                <Caret $left={23}><ZoomMinus /></Caret>
                <ZoomSlider><ZoomThumb /></ZoomSlider>
                <ZoomPlus />
                <ZoomPercent>100%</ZoomPercent>
            </StatusBar>
        </Page>
    )
}
